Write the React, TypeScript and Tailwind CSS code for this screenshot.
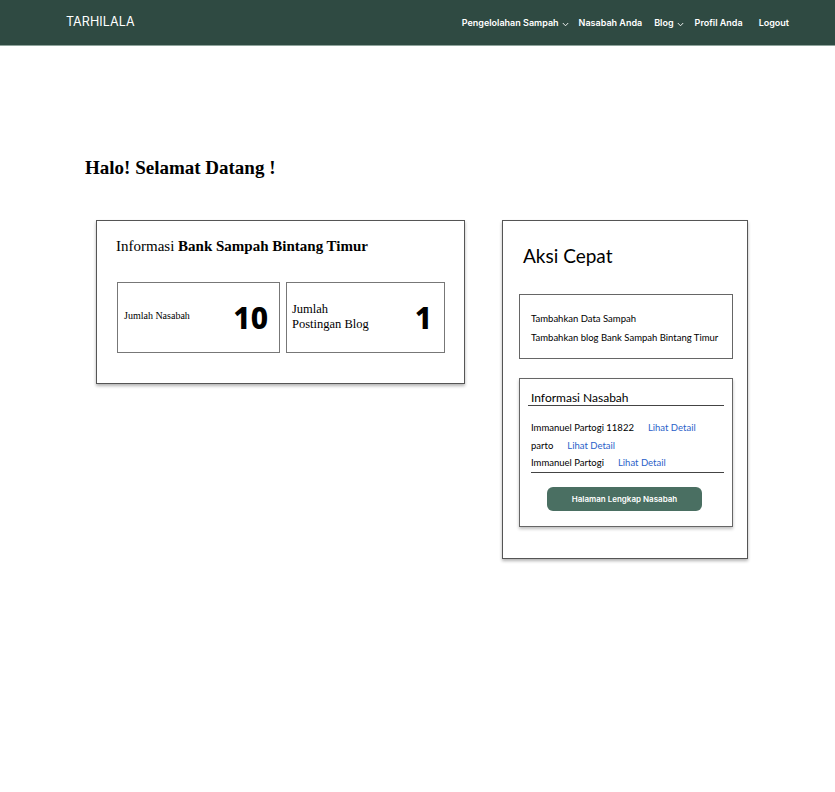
import React from "react";

const Chevron = () => (
  <svg width="7" height="5" viewBox="0 0 7 5" className="ml-[3px] mt-[3px]" fill="none">
    <path d="M0.8 1 L3.5 3.8 L6.2 1" stroke="#ffffff" strokeWidth="0.9" />
  </svg>
);

export default function App() {
  return (
    <div className="min-h-[792px] w-[835px] bg-white">
      <nav className="flex h-[46px] items-center justify-between border-b border-[#8fa49c] bg-[#2f4a42] pl-[66px] pr-[46px] font-['Inter',sans-serif] text-white">
        <div className="text-[12.5px] tracking-[0.1px]">TARHILALA</div>
        <div className="flex items-center text-[9px] font-semibold">
          <span className="flex items-center">Pengelolahan Sampah<Chevron /></span>
          <span className="ml-[10px]">Nasabah Anda</span>
          <span className="ml-[12px] flex items-center">Blog<Chevron /></span>
          <span className="ml-[11px]">Profil Anda</span>
          <span className="ml-[16px]">Logout</span>
        </div>
      </nav>

      <main className="pl-[85px] pt-[110px]">
        <h1 className="font-['Liberation_Serif',serif] text-[19px] font-bold text-black leading-[24px]">
          Halo! Selamat Datang !
        </h1>

        <div className="mt-[40px] ml-[11px] flex items-start gap-[37px]">
          <section className="h-[164px] w-[369px] border border-[#555] bg-white px-[19px] pt-[15px] shadow-[0_2px_3px_rgba(0,0,0,0.3)]">
            <h2 className="font-['Liberation_Serif',serif] text-[15px] leading-[20px] text-black">
              <span>Informasi </span>
              <span className="font-bold">Bank Sampah Bintang Timur</span>
            </h2>
            <div className="mt-[26px] ml-[1px] flex gap-[6px]">
              <div className="flex h-[71px] w-[163px] items-center justify-between border border-[#777] pl-[6px] pr-[11px]">
                <span className="font-['Liberation_Serif',serif] text-[10px] -mt-[5px]">Jumlah Nasabah</span>
                <span className="font-['Noto_Sans',sans-serif] text-[30px] font-extrabold leading-none">10</span>
              </div>
              <div className="flex h-[71px] w-[159px] items-center justify-between border border-[#777] pl-[5px] pr-[12px]">
                <span className="font-['Liberation_Serif',serif] text-[12.5px] leading-[15px] -mt-[2px]">
                  Jumlah<br />Postingan Blog
                </span>
                <span className="font-['Noto_Sans',sans-serif] text-[30px] font-extrabold leading-none">1</span>
              </div>
            </div>
          </section>

          <section className="h-[339px] w-[246px] border border-[#555] bg-white px-[16px] pt-[23px] shadow-[0_2px_3px_rgba(0,0,0,0.3)]">
            <h2 className="pl-[4px] font-['Lato',sans-serif] text-[19px] leading-[24px] text-black">Aksi Cepat</h2>
            <div className="mt-[26px] flex h-[65px] w-[214px] flex-col justify-center gap-[6px] border border-[#666] pl-[11px] pt-[2px] font-['Lato',sans-serif] text-[9.5px] leading-[13px]">
              <span>Tambahkan Data Sampah</span>
              <span>Tambahkan blog Bank Sampah Bintang Timur</span>
            </div>
            <div className="mt-[19px] h-[149px] w-[214px] border border-[#666] pt-[11px] font-['Lato',sans-serif] shadow-[0_2px_3px_rgba(0,0,0,0.25)]">
              <div className="ml-[8px] w-[196px] border-b border-[#444] pl-[3px] text-[12px] leading-[15px]">Informasi Nasabah</div>
              <div className="ml-[11px] mt-[15px] w-[193px] border-b border-[#444] pb-[2px] text-[9.5px]">
                <div className="flex h-[14px] items-center"><span>Immanuel Partogi 11822</span><span className="ml-[14px] text-[#2a5fc9]">Lihat Detail</span></div>
                <div className="mt-[4px] flex h-[14px] items-center"><span>parto</span><span className="ml-[14px] text-[#2a5fc9]">Lihat Detail</span></div>
                <div className="mt-[3px] flex h-[14px] items-center"><span>Immanuel Partogi</span><span className="ml-[14px] text-[#2a5fc9]">Lihat Detail</span></div>
              </div>
              <div className="mt-[14px] flex justify-center">
                <button className="-ml-[3px] h-[24px] w-[155px] rounded-[6px] bg-[#4a6f62] font-['Inter',sans-serif] text-[8px] font-semibold text-white">
                  Halaman Lengkap Nasabah
                </button>
              </div>
            </div>
          </section>
        </div>
      </main>
    </div>
  );
}
